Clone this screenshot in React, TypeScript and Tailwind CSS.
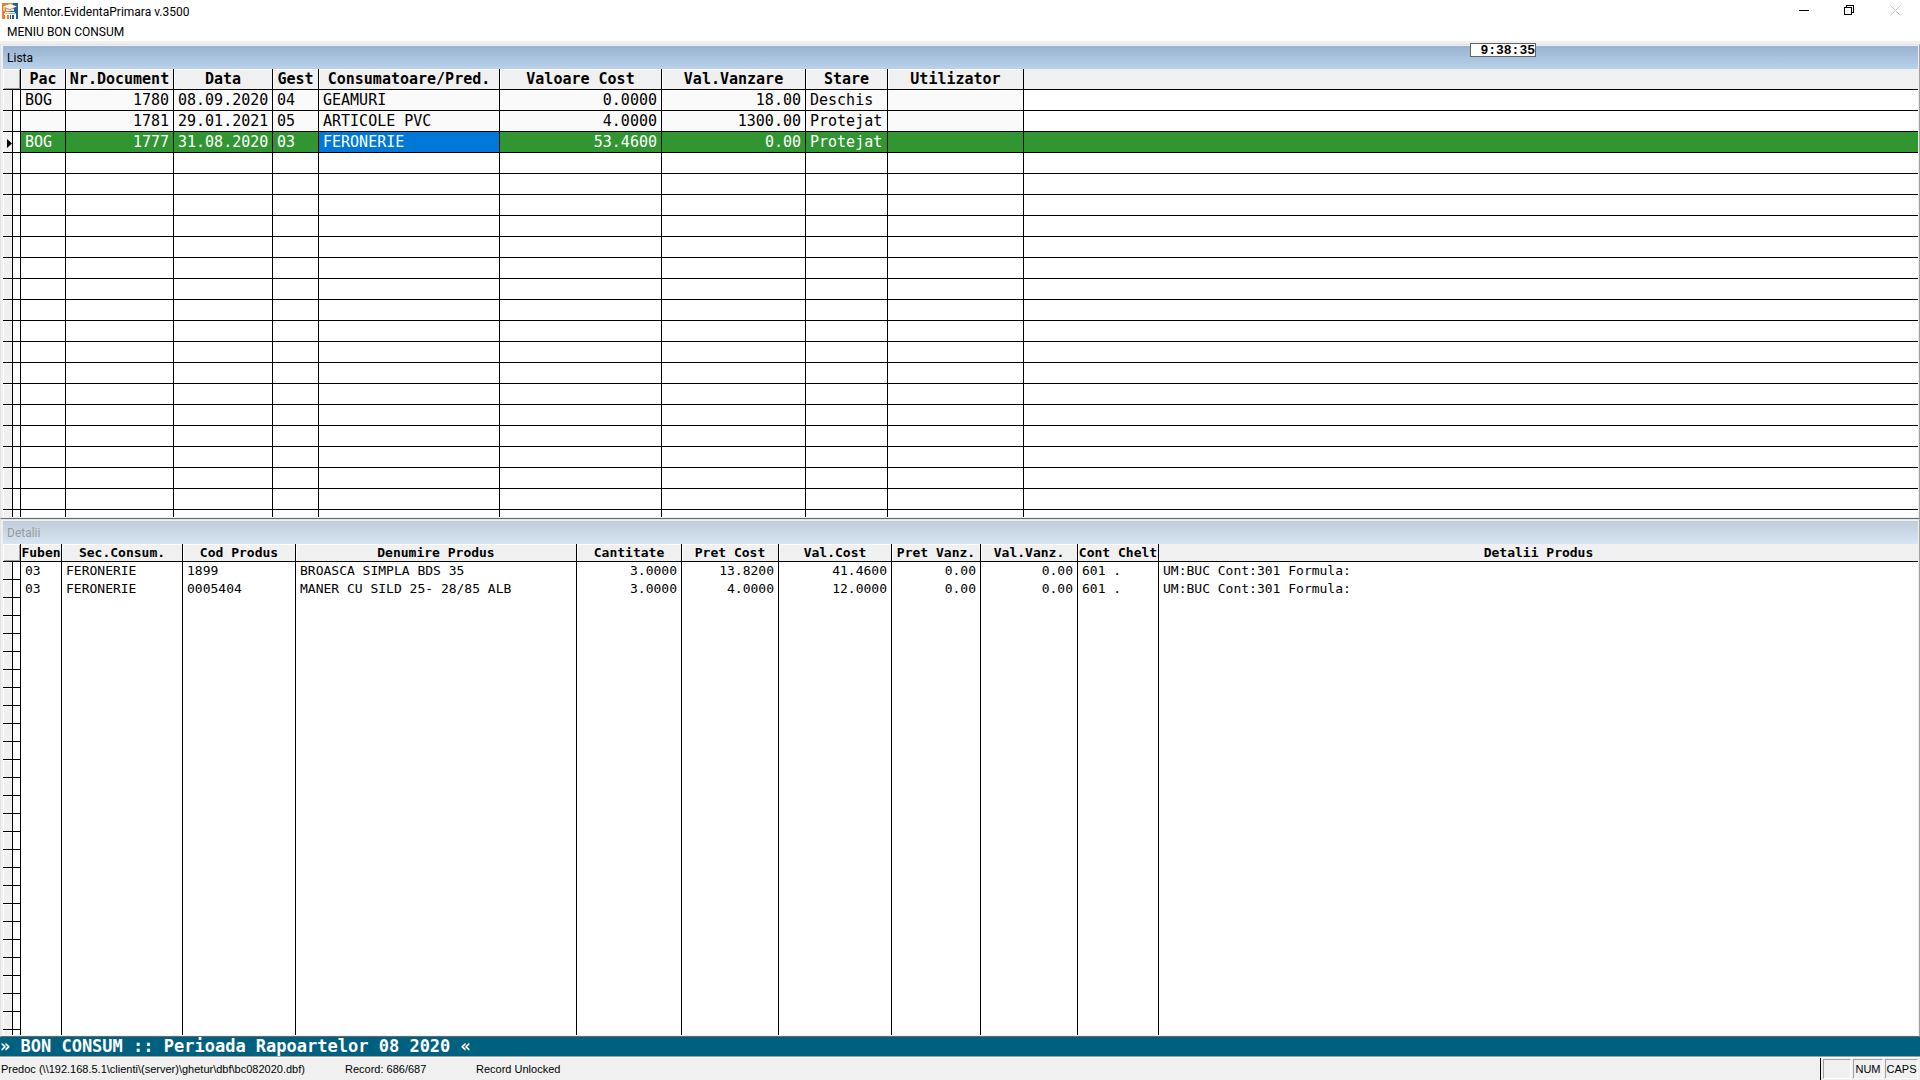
import { ReactNode } from "react";
import clsx from "clsx";

type Column = {
  title: string;
  width?: string;
  align?: "right";
};

const documentColumns: Column[] = [
  { title: "Pac", width: "w-[45px]" },
  { title: "Nr.Document", width: "w-[108px]", align: "right" },
  { title: "Data", width: "w-[99px]", align: "right" },
  { title: "Gest", width: "w-[46px]" },
  { title: "Consumatoare/Pred.", width: "w-[181px]" },
  { title: "Valoare Cost", width: "w-[162px]", align: "right" },
  { title: "Val.Vanzare", width: "w-[144px]", align: "right" },
  { title: "Stare", width: "w-[82px]" },
  { title: "Utilizator", width: "w-[136px]" },
  { title: "" },
];

const documents = [
  ["BOG", "1780", "08.09.2020", "04", "GEAMURI", "0.0000", "18.00", "Deschis", "", ""],
  ["", "1781", "29.01.2021", "05", "ARTICOLE PVC", "4.0000", "1300.00", "Protejat", "", ""],
  ["BOG", "1777", "31.08.2020", "03", "FERONERIE", "53.4600", "0.00", "Protejat", "", ""],
];

const productColumns: Column[] = [
  { title: "Fuben", width: "w-[41px]" },
  { title: "Sec.Consum.", width: "w-[121px]" },
  { title: "Cod Produs", width: "w-[113px]" },
  { title: "Denumire Produs", width: "w-[281px]" },
  { title: "Cantitate", width: "w-[105px]", align: "right" },
  { title: "Pret Cost", width: "w-[97px]", align: "right" },
  { title: "Val.Cost", width: "w-[113px]", align: "right" },
  { title: "Pret Vanz.", width: "w-[89px]", align: "right" },
  { title: "Val.Vanz.", width: "w-[97px]", align: "right" },
  { title: "Cont Chelt", width: "w-[81px]" },
  { title: "Detalii Produs" },
];

const products = [
  ["03", "FERONERIE", "1899", "BROASCA SIMPLA BDS 35", "3.0000", "13.8200", "41.4600", "0.00", "0.00", "601 .", "UM:BUC Cont:301 Formula:"],
  ["03", "FERONERIE", "0005404", "MANER CU SILD 25- 28/85 ALB", "3.0000", "4.0000", "12.0000", "0.00", "0.00", "601 .", "UM:BUC Cont:301 Formula:"],
];

const SELECTED_ROW = 2;
const SELECTED_COLUMN = 4;
const ROW_COUNT = 40;

function AppIcon() {
  return (
    <svg className="h-4 w-4" viewBox="0 0 16 16" aria-hidden="true">
      <rect width="16" height="16" fill="#f07d2b" />
      <path d="M16 0v16H7V9l4-3V0z" fill="#1f5f9f" />
      <path d="M0 0h11v1L3 3 0 5z" fill="#f07d2b" />
      <path d="M1 3.5L8 1l7 2.5L8 6z" fill="#fff" />
      <path d="M4 5.5l4 1.5 4-1.5V8H4z" fill="#dfe6ee" />
      <path d="M2 4v4" stroke="#fff" />
      <path d="M2 10.5h12v1.5H2zM3 11h2v5H3zM7 11h1v5H7zM9 11h1v5H9zM12 11h2v5h-2z" fill="#fff" />
      <path d="M3 9.5h10" stroke="#fff" />
    </svg>
  );
}

function TitleBar() {
  return (
    <header className="flex h-6 shrink-0 items-start justify-between pr-[2px]">
      <div className="flex items-start gap-[5px] pt-[3px] pl-[2px]">
        <AppIcon />
        <h1 className="text-[12px] leading-[18px]">Mentor.EvidentaPrimara v.3500</h1>
      </div>
      <div className="flex">
        <button aria-label="Minimize" className="flex h-[21px] w-[46px] items-center justify-center">
          <svg className="h-[11px] w-[11px]" viewBox="0 0 11 11" shapeRendering="crispEdges">
            <path d="M1 5.5h10" stroke="#000" />
          </svg>
        </button>
        <button aria-label="Restore" className="flex h-[21px] w-[46px] items-center justify-center">
          <svg className="h-[11px] w-[11px]" viewBox="0 0 11 11" fill="none" stroke="#000" shapeRendering="crispEdges">
            <path d="M0.5 2.5h7v7h-7zM2.5 2.5v-2h7v7h-2" />
          </svg>
        </button>
        <button aria-label="Close" disabled className="flex h-[21px] w-[46px] items-center justify-center">
          <svg className="h-[11px] w-[11px]" viewBox="0 0 11 11" stroke="#c4c4c4">
            <path d="M0.5 0.5l10 10M10.5 0.5l-10 10" />
          </svg>
        </button>
      </div>
    </header>
  );
}

function Pane({
  title,
  active,
  className,
  children,
}: {
  title: string;
  active?: boolean;
  className: string;
  children: ReactNode;
}) {
  return (
    <section
      className={clsx(
        "flex min-h-0 basis-0 flex-col border-t border-r border-b border-l border-t-[#e3e3e3] border-r-[#a0a0a0] border-b-[#696969] border-l-[#e3e3e3] bg-[#f0f0f0] pt-px pr-px pb-px pl-[2px]",
        className,
      )}
    >
      <h2
        className={clsx(
          "h-[23px] shrink-0 bg-linear-to-b pl-1 text-[12px] leading-[25px]",
          active
            ? "from-[#99b4d1] to-[#b9d1ea] text-black"
            : "from-[#bfcddb] to-[#d7e4f2] text-[#9a9a9a]",
        )}
      >
        {title}
      </h2>
      <div className="min-h-0 grow overflow-hidden bg-white">{children}</div>
    </section>
  );
}

function Browse({
  label,
  columns,
  rows,
  large,
}: {
  label: string;
  columns: Column[];
  rows: string[][];
  large?: boolean;
}) {
  const rowHeight = large ? "h-[21px]" : "h-[18px]";

  return (
    <table
      aria-label={label}
      className={clsx(
        "w-full table-fixed border-separate border-spacing-0 font-['DejaVu_Sans_Mono',monospace] whitespace-pre",
        large ? "text-[15px] leading-5" : "text-[13px] leading-[17px]",
      )}
    >
      <colgroup>
        <col className="w-[10px]" />
        <col className="w-[8px]" />
        {columns.map((column) => (
          <col key={column.title} className={column.width} />
        ))}
      </colgroup>
      <thead>
        <tr className={rowHeight}>
          <td
            colSpan={2}
            className="border-r border-b border-black bg-[#f0f0f0] p-0 shadow-[inset_1px_1px_#fff,inset_-1px_-1px_#a0a0a0]"
          ></td>
          {columns.map((column, i) => (
            <th
              key={column.title}
              className={clsx(
                "border-b border-black bg-[#f0f0f0] p-0 text-center font-bold",
                i < columns.length - 1 && "border-r shadow-[inset_1px_1px_#fff]",
              )}
            >
              {column.title}
            </th>
          ))}
        </tr>
      </thead>
      <tbody>
        {Array.from({ length: ROW_COUNT }, (_, r) => {
          const row = rows[r];
          const selected = large && r === SELECTED_ROW;

          return (
            <tr key={r} className={rowHeight}>
              <td className="border-r border-b border-black bg-[#f0f0f0] p-0 shadow-[inset_1px_1px_#fff]">
                {selected && (
                  <svg className="mt-[2px] ml-1 h-[9px] w-[5px]" viewBox="0 0 5 9">
                    <path d="M0 0l5 4.5L0 9z" />
                  </svg>
                )}
              </td>
              <td className="border-r border-b border-black bg-white p-0"></td>
              {columns.map((column, c) => {
                const last = c === columns.length - 1;
                return (
                  <td
                    key={column.title}
                    className={clsx(
                      "overflow-hidden border-black px-1 py-0",
                      column.align === "right" && "text-right",
                      !last && "border-r",
                      large && "border-b",
                      large && row && !selected && !last && "bg-[#fafafa]",
                      selected && "text-white",
                      selected && (c === SELECTED_COLUMN ? "bg-[#0078d7]" : "bg-[#319631]"),
                    )}
                  >
                    {row?.[c]}
                  </td>
                );
              })}
            </tr>
          );
        })}
      </tbody>
    </table>
  );
}

function StatusBar() {
  const box =
    "flex h-[20px] items-center justify-center border border-t-[#a0a0a0] border-r-white border-b-white border-l-[#a0a0a0]";

  return (
    <footer className="flex h-[23px] shrink-0 items-center justify-between border-t border-white bg-[#f0f0f0] font-['Liberation_Sans',Arial,sans-serif] text-[11px] whitespace-nowrap">
      <div className="flex">
        <span className="w-[345px] pl-px">Predoc (\\192.168.5.1\clienti\(server)\ghetur\dbf\bc082020.dbf)</span>
        <span className="w-[131px]">Record: 686/687</span>
        <span>Record Unlocked</span>
      </div>
      <div className="flex h-full items-center gap-[2px] border-l border-black pr-[2px] pl-[2px]">
        <span className={clsx(box, "w-[28px]")}></span>
        <span className={clsx(box, "w-[30px]")}>NUM</span>
        <span className={clsx(box, "w-[33px]")}>CAPS</span>
      </div>
    </footer>
  );
}

function App() {
  return (
    <div className="relative flex h-screen flex-col overflow-hidden bg-white font-[Roboto,'Segoe_UI',sans-serif] text-black">
      <TitleBar />
      <nav className="flex h-[17px] shrink-0 items-center pl-[7px]">
        <button className="text-[12px] leading-[17px]">MENIU BON CONSUM</button>
      </nav>
      <main className="flex min-h-0 grow flex-col bg-[#f0f0f0] pt-[3px]">
        <Pane title="Lista" active className="grow-[474]">
          <Browse label="Lista" columns={documentColumns} rows={documents} large />
        </Pane>
        <Pane title="Detalii" className="grow-[518]">
          <Browse label="Detalii" columns={productColumns} rows={products} />
        </Pane>
      </main>
      <p className="h-5 shrink-0 border-b border-[#a0a0a0] bg-[#006080] font-['DejaVu_Sans_Mono',monospace] text-[17px] leading-[19px] font-bold whitespace-pre text-white">
        » BON CONSUM :: Perioada Rapoartelor 08 2020 «
      </p>
      <StatusBar />
      <time className="absolute top-[43px] right-[384px] h-[14px] w-[66px] border border-[#646464] bg-white text-right font-['Liberation_Mono',monospace] text-[13px] leading-[13px] font-bold">
        9:38:35
      </time>
    </div>
  );
}

export default App;
